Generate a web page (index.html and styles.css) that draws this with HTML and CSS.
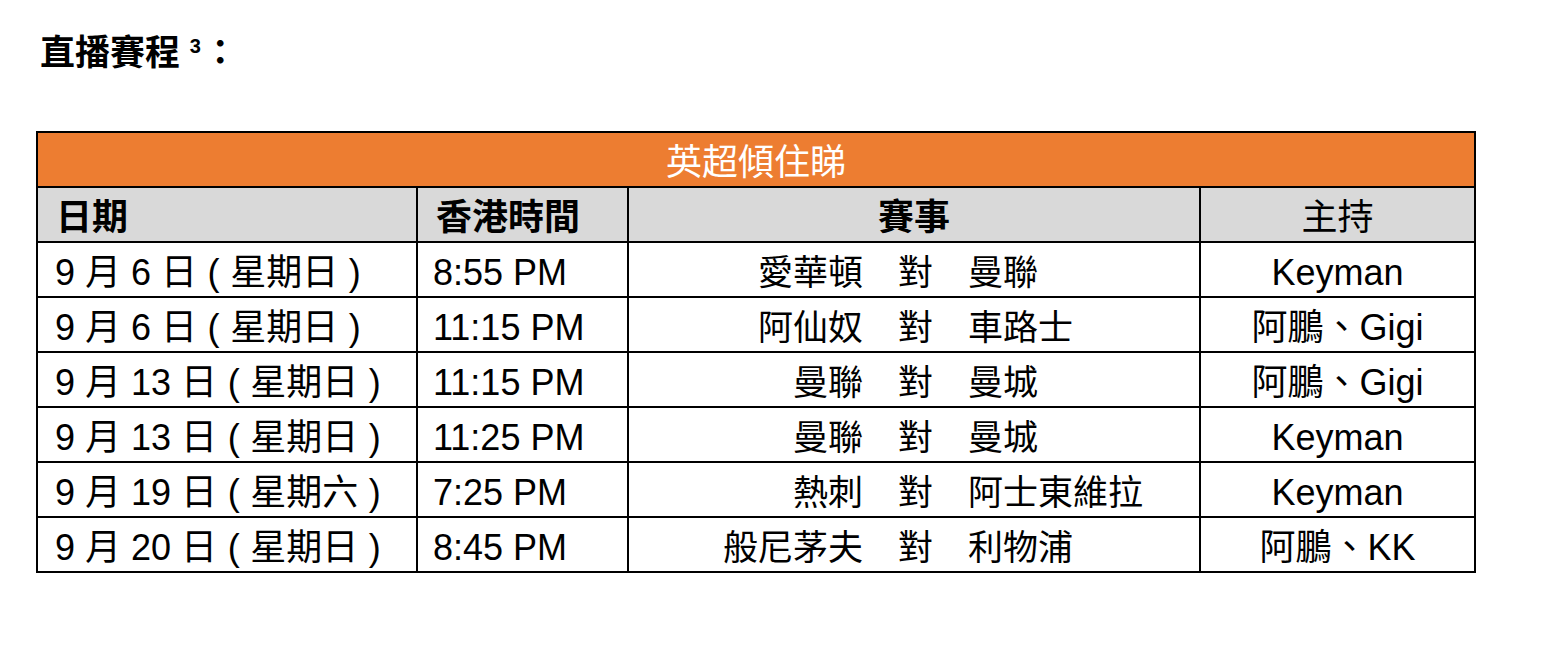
FILE: index.html
```html
<!DOCTYPE html>
<html lang="zh-Hant">
<head>
<meta charset="utf-8">
<title>直播賽程</title>
<link rel="stylesheet" href="styles.css">
</head>
<body>
<h1 class="title">直播賽程 <sup class="note">3</sup>：</h1>
<table class="schedule">
  <colgroup>
    <col class="c-date">
    <col class="c-time">
    <col class="c-match">
    <col class="c-host">
  </colgroup>
  <thead>
    <tr class="banner"><th colspan="4">英超傾住睇</th></tr>
    <tr class="heads">
      <th class="left bold">日期</th>
      <th class="left bold">香港時間</th>
      <th class="bold">賽事</th>
      <th>主持</th>
    </tr>
  </thead>
  <tbody>
    <tr>
      <td class="date">9 月 6 日<span class="paren">(</span>星期日<span class="paren">)</span></td>
      <td class="time">8:55 PM</td>
      <td><div class="match"><span class="home">愛華頓</span><span class="vs">對</span><span class="away">曼聯</span></div></td>
      <td class="host">Keyman</td>
    </tr>
    <tr>
      <td class="date">9 月 6 日<span class="paren">(</span>星期日<span class="paren">)</span></td>
      <td class="time">11:15 PM</td>
      <td><div class="match"><span class="home">阿仙奴</span><span class="vs">對</span><span class="away">車路士</span></div></td>
      <td class="host">阿鵬、Gigi</td>
    </tr>
    <tr>
      <td class="date">9 月 13 日<span class="paren">(</span>星期日<span class="paren">)</span></td>
      <td class="time">11:15 PM</td>
      <td><div class="match"><span class="home">曼聯</span><span class="vs">對</span><span class="away">曼城</span></div></td>
      <td class="host">阿鵬、Gigi</td>
    </tr>
    <tr>
      <td class="date">9 月 13 日<span class="paren">(</span>星期日<span class="paren">)</span></td>
      <td class="time">11:25 PM</td>
      <td><div class="match"><span class="home">曼聯</span><span class="vs">對</span><span class="away">曼城</span></div></td>
      <td class="host">Keyman</td>
    </tr>
    <tr>
      <td class="date">9 月 19 日<span class="paren">(</span>星期六<span class="paren">)</span></td>
      <td class="time">7:25 PM</td>
      <td><div class="match"><span class="home">熱刺</span><span class="vs">對</span><span class="away">阿士東維拉</span></div></td>
      <td class="host">Keyman</td>
    </tr>
    <tr>
      <td class="date">9 月 20 日<span class="paren">(</span>星期日<span class="paren">)</span></td>
      <td class="time">8:45 PM</td>
      <td><div class="match"><span class="home">般尼茅夫</span><span class="vs">對</span><span class="away">利物浦</span></div></td>
      <td class="host">阿鵬、KK</td>
    </tr>
  </tbody>
</table>
</body>
</html>
```

FILE: styles.css
```css
html, body {
  margin: 0;
  padding: 0;
  background: #ffffff;
}

body {
  font-family: "Liberation Sans", "Noto Sans CJK TC", sans-serif;
  color: #000000;
  padding: 29px 0 0 36px;
}

.title {
  margin: 0 0 0 4px;
  font-size: 35px;
  font-weight: bold;
  line-height: 48px;
}

.note {
  font-size: 20px;
  vertical-align: 12px;
  line-height: 0;
  margin-left: 0;
  margin-right: 2px;
}

.schedule {
  margin-top: 54px;
  width: 1438px;
  border-collapse: collapse;
  table-layout: fixed;
  font-size: 36px;
}

.c-date { width: 380px; }
.c-time { width: 211px; }
.c-match { width: 572px; }
.c-host { width: 275px; }

.schedule th,
.schedule td {
  border: 2px solid #000000;
  height: 47px;
  padding: 6px 0 0 0;
  font-weight: normal;
  text-align: center;
  vertical-align: middle;
  white-space: nowrap;
  line-height: 40px;
}

.banner th {
  background: #ed7d31;
  color: #ffffff;
}

.heads th {
  background: #d9d9d9;
}

.heads th.left {
  text-align: left;
  padding-left: 18px;
}

.heads th.bold {
  font-weight: bold;
}

.schedule td.date {
  text-align: left;
  padding-left: 17px;
}

.paren {
  display: inline-block;
  width: 0.92em;
  text-align: center;
}

.schedule td.time {
  text-align: left;
  padding-left: 15px;
}

.match {
  display: grid;
  grid-template-columns: 234px 35px 35px 35px 1fr;
  font-size: 35px;
}

.home {
  grid-column: 1;
  text-align: right;
}

.vs {
  grid-column: 3;
  text-align: center;
}

.away {
  grid-column: 5;
  text-align: left;
}
```
